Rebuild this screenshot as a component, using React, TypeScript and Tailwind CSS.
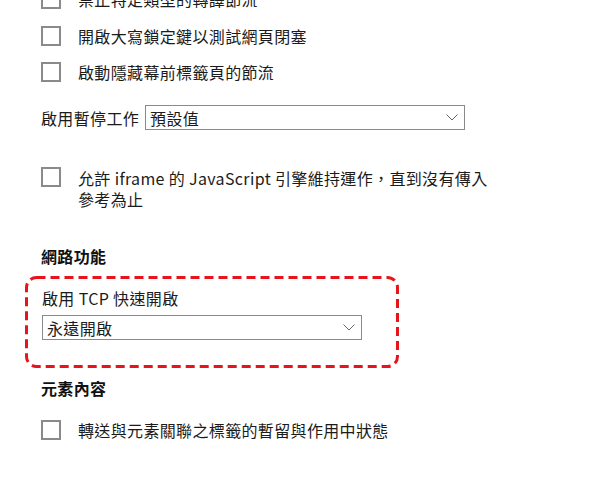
import React from 'react';

const font = { fontFamily: '"Noto Sans CJK TC", "Noto Sans", sans-serif' };

const Checkbox = () => (
  <span className="block w-[20px] h-[20px] shrink-0 border-2 border-[#8a8a8a] bg-white" />
);

const Chevron = () => (
  <svg width="12" height="7" viewBox="0 0 12 7" className="shrink-0">
    <path d="M0.5 0.5 L6 6 L11.5 0.5" fill="none" stroke="#666" strokeWidth="1" />
  </svg>
);

const Select = ({ value, width }: { value: string; width: string }) => (
  <div className={`flex items-center justify-between h-[25px] border border-[#8a8a8a] bg-white pl-[4px] pr-[6px] ${width}`}>
    <span className="text-[16px] leading-[22px] tracking-[0.35px] text-[#1b1b1b]">{value}</span>
    <Chevron />
  </div>
);

const CheckRow = ({ label, className = '' }: { label: string; className?: string }) => (
  <div className={`flex items-center gap-[17px] h-[20px] ${className}`}>
    <Checkbox />
    <span className="text-[16px] leading-[22px] tracking-[0.35px] text-[#1b1b1b] whitespace-nowrap">{label}</span>
  </div>
);

export default function App() {
  return (
    <div className="w-[600px] h-[503px] overflow-hidden bg-white" style={font}>
      <div className="flex flex-col pl-[41px] -mt-[11px]">
        <CheckRow label="禁止特定類型的轉譯節流" />
        <CheckRow label="開啟大寫鎖定鍵以測試網頁閉塞" className="mt-[17px]" />
        <CheckRow label="啟動隱藏幕前標籤頁的節流" className="mt-[16px]" />

        <div className="flex items-center mt-[23px]">
          <span className="text-[16px] leading-[22px] tracking-[0.35px] text-[#1b1b1b] mr-[6px]">啟用暫停工作</span>
          <Select value="預設值" width="w-[320px]" />
        </div>

        <div className="flex items-start gap-[17px] mt-[37px]">
          <Checkbox />
          <span className="mt-[1px] w-[418px] text-[16px] leading-[21px] tracking-[0.35px] text-[#1b1b1b]">
            允許 iframe 的 JavaScript 引擎維持運作，直到沒有傳入參考為止
          </span>
        </div>

        <h3 className="mt-[35px] text-[16px] leading-[22px] font-bold tracking-[0.35px] text-[#111]">網路功能</h3>

        <div className="relative -ml-[16px] w-[374px] mt-[9px] pl-[17px] pt-[11px] pb-[29px]">
          <svg className="absolute inset-0 pointer-events-none" width="374" height="92" viewBox="0 0 374 92">
            <rect x="1.5" y="1.5" width="371" height="89" rx="10" ry="10" fill="none" stroke="#e8141b" strokeWidth="3" strokeDasharray="9 5" />
          </svg>
          <div className="text-[16px] leading-[22px] tracking-[0.35px] text-[#1b1b1b]">啟用 TCP 快速開啟</div>
          <div className="mt-[6px]">
            <Select value="永遠開啟" width="w-[320px] h-[24px]" />
          </div>
        </div>

        <h3 className="mt-[8px] text-[16px] leading-[22px] font-bold tracking-[0.35px] text-[#111]">元素內容</h3>

        <CheckRow label="轉送與元素關聯之標籤的暫留與作用中狀態" className="mt-[21px]" />
      </div>
    </div>
  );
}
